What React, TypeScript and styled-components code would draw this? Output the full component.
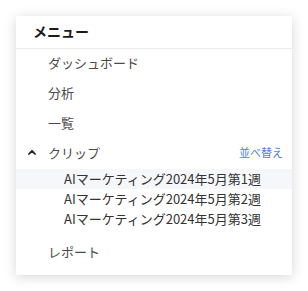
import React from "react";
import styled, { createGlobalStyle } from "styled-components";

const Global = createGlobalStyle`
  html, body { margin: 0; padding: 0; background: #ffffff; }
  body { font-family: "Noto Sans CJK JP", "Noto Sans", sans-serif; }
`;

const Card = styled.nav`
  margin: 16px;
  width: 276px;
  height: 259px;
  box-sizing: border-box;
  background: #ffffff;
  box-shadow: 0 2px 12px rgba(0, 0, 0, 0.16);
  display: flex;
  flex-direction: column;
`;

const Header = styled.div`
  height: 33px;
  box-sizing: border-box;
  padding: 0 17px 2px;
  display: flex;
  align-items: center;
  border-bottom: 1px solid #ececec;
  font-size: 14px;
  font-weight: 700;
  color: #1a1a1a;
`;

const List = styled.ul`
  list-style: none;
  margin: 0;
  padding: 0;
  display: flex;
  flex-direction: column;
  gap: 2px;
`;

const Item = styled.li`
  height: 28px;
  box-sizing: border-box;
  display: flex;
  align-items: center;
  padding: 0 9px 2px 32px;
  position: relative;
  font-size: 13px;
  color: #4a4a4a;
`;

const Chevron = styled.svg`
  position: absolute;
  left: 12px;
  top: 10px;
`;

const Label = styled.span`
  flex: 1;
`;

const Sort = styled.span`
  font-size: 11px;
  color: #4f7fd1;
`;

const SubList = styled.ul<{ $after: number }>`
  list-style: none;
  margin: 0 0 ${(p) => p.$after}px;
  padding: 0;
  display: flex;
  flex-direction: column;
`;

const SubItem = styled.li<{ $active?: boolean }>`
  height: 20px;
  box-sizing: border-box;
  display: flex;
  align-items: center;
  padding: 0 0 1px 48px;
  font-size: 13px;
  color: #333333;
  background: ${(p) => (p.$active ? "#f5f7fa" : "transparent")};
`;

export default function App() {
  const clips = [1, 2, 3];
  return (
    <>
      <Global />
      <Card>
        <Header>メニュー</Header>
        <List>
          <Item>ダッシュボード</Item>
          <Item>分析</Item>
          <Item>一覧</Item>
          <Item>
            <Chevron width="8" height="6" viewBox="0 0 8 6">
              <path d="M1 5 L4 1.8 L7 5" fill="none" stroke="#222" strokeWidth="1.8" strokeLinecap="round" strokeLinejoin="round" />
            </Chevron>
            <Label>クリップ</Label>
            <Sort>並べ替え</Sort>
          </Item>
          <SubList $after={7}>
            {clips.map((n) => (
              <SubItem key={n} $active={n === 1}>
                AIマーケティング2024年5月第{n}週
              </SubItem>
            ))}
          </SubList>
          <Item>レポート</Item>
        </List>
      </Card>
    </>
  );
}
